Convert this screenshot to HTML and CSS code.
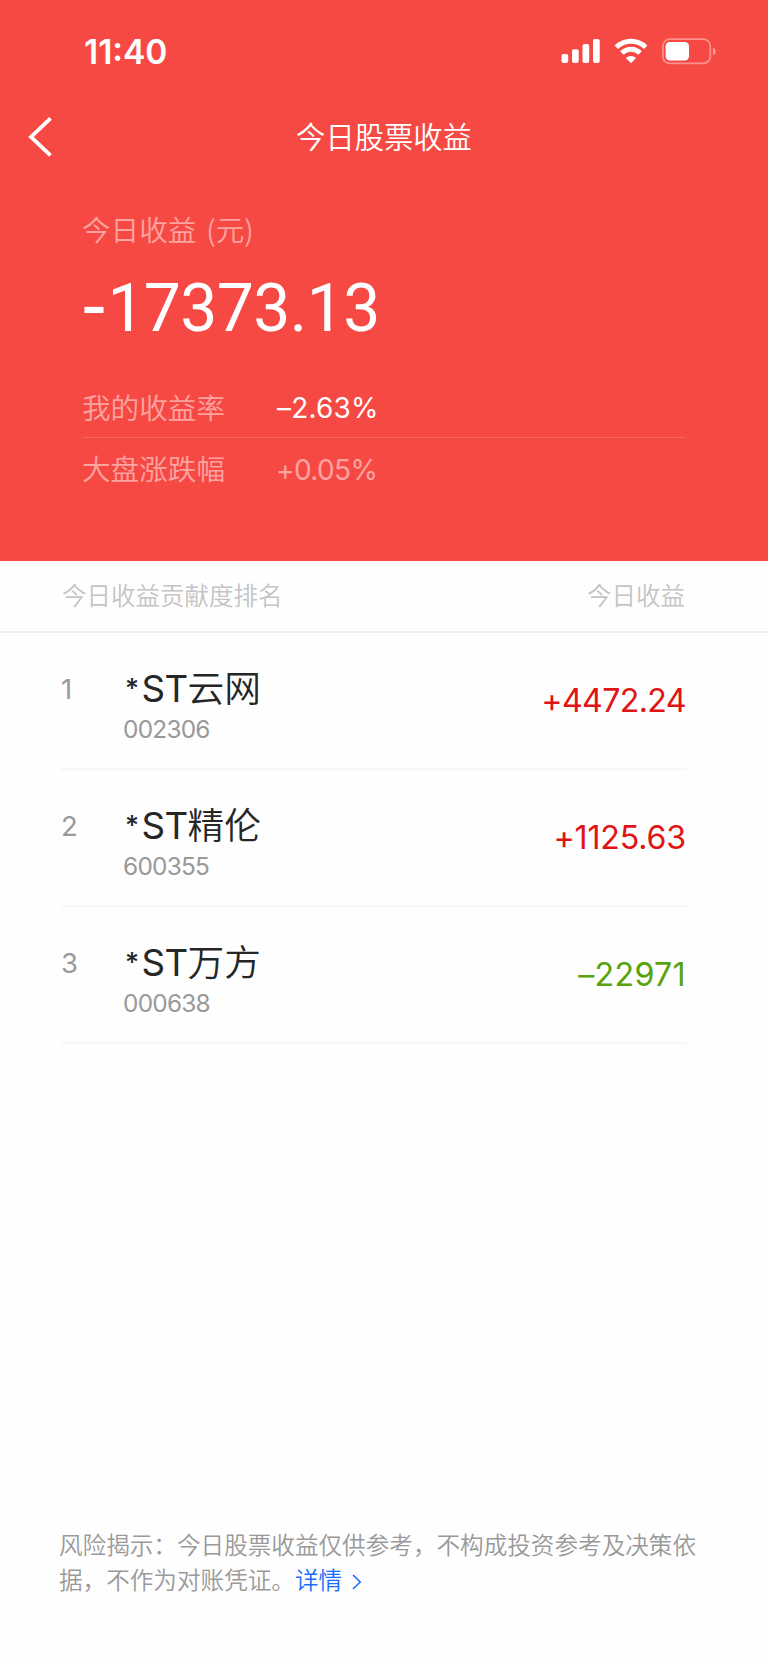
FILE: index.html
```html
<!DOCTYPE html>
<html lang="zh-CN">
<head>
<meta charset="utf-8">
<title>今日股票收益</title>
<link rel="stylesheet" href="styles.css">
</head>
<body>
<header class="hero">
  <div class="status">
    <span class="time">11:40</span>
    <div class="status-icons">
      <svg class="signal" width="40" height="26" viewBox="0 0 40 26" fill="#fff">
        <rect x="0.5" y="16" width="6.7" height="9" rx="2"/>
        <rect x="11" y="11.3" width="6.7" height="13.7" rx="2"/>
        <rect x="21.5" y="6" width="6.7" height="19" rx="2"/>
        <rect x="32" y="1" width="6.7" height="24" rx="2"/>
      </svg>
      <svg class="wifi" width="34" height="26" viewBox="0 0 34 26">
        <g fill="none" stroke="#fff" stroke-width="4.9">
          <path d="M2.3 9.3a20.8 20.8 0 0 1 29.4 0"/>
          <path d="M7.9 15a12.8 12.8 0 0 1 18.2 0"/>
        </g>
        <path d="M17 25.2l-5.1-5.2a7.3 7.3 0 0 1 10.2 0z" fill="#fff"/>
      </svg>
      <svg class="battery" width="55" height="27" viewBox="0 0 55 27">
        <rect x="0.9" y="1.2" width="47.4" height="24.2" rx="7" fill="none" stroke="#fff" stroke-opacity=".4" stroke-width="1.7"/>
        <rect x="3.6" y="4" width="23.4" height="18.4" rx="4.2" fill="#fff"/>
        <path d="M51 9.4c3.6 1.4 3.6 6.4 0 7.8z" fill="#fff" fill-opacity=".45"/>
      </svg>
    </div>
  </div>
  <nav class="navbar">
    <svg class="back" width="26" height="40" viewBox="0 0 26 40"><path d="M23.5 1.4L4 20L23.5 38.4" fill="none" stroke="#fff" stroke-width="3.8"/></svg>
    <h1 class="title">今日股票收益</h1>
  </nav>
  <section class="summary">
    <p class="label earn">今日收益 (元)</p>
    <p class="total"><span class="sign">-</span>17373.13</p>
    <div class="stat"><span class="label">我的收益率</span><span class="rate mine">–2.63%</span></div>
    <div class="stat market"><span class="label">大盘涨跌幅</span><span class="rate">+0.05%</span></div>
  </section>
</header>
<main class="ranking">
  <div class="list-head"><span>今日收益贡献度排名</span><span>今日收益</span></div>
  <ol class="stocks">
    <li class="stock"><span class="rank">1</span><div class="info"><span class="name"><span class="st"><span class="star">*</span>ST</span>云网</span><span class="code">002306</span></div><span class="amount up tight">+4472.24</span></li>
    <li class="stock"><span class="rank">2</span><div class="info"><span class="name"><span class="st"><span class="star">*</span>ST</span>精伦</span><span class="code">600355</span></div><span class="amount up">+1125.63</span></li>
    <li class="stock"><span class="rank">3</span><div class="info"><span class="name"><span class="st"><span class="star">*</span>ST</span>万方</span><span class="code">000638</span></div><span class="amount down">–22971</span></li>
  </ol>
</main>
<footer class="notice">风险揭示：今日股票收益仅供参考，不构成投资参考及决策依据，不作为对账凭证。<a class="more">详情<svg class="chevron" width="10" height="16" viewBox="0 0 10 16"><path d="M1 1l7.2 7L1 15" fill="none" stroke="#1a6dff" stroke-width="1.6"/></svg></a></footer>
</body>
</html>
```
FILE: styles.css
```css
* { box-sizing: border-box; margin: 0; padding: 0; }
body {
  width: 768px;
  height: 1663px;
  display: flex;
  flex-direction: column;
  background: #fefefe;
  color: #262626;
  font-family: "Noto Sans CJK SC", sans-serif;
  font-weight: 350;
  overflow: hidden;
}
.hero { height: 560.6px; background: #f74944; color: #fff; }
.status {
  height: 105px;
  padding: 0 51px 0 84px;
  display: flex;
  justify-content: space-between;
}
.time {
  margin-top: 32px;
  font: 600 33.5px/40px Inter, sans-serif;
}
.status-icons { display: flex; margin-top: 38px; height: 27px; }
.signal { margin-right: 13px; }
.wifi { margin-right: 14px; }
.navbar {
  height: 60px;
  display: grid;
  grid-template-columns: 1fr auto 1fr;
  align-items: center;
}
.back { margin-left: 27px; margin-top: 3px; }
.title { font-size: 29.3px; font-weight: 350; line-height: 60px; }
.summary { padding: 44px 82px 0; }
.label { font-size: 28.6px; line-height: 40px; color: rgba(255, 255, 255, .5); }
.earn { word-spacing: 3.5px; }
.total {
  margin: 23px 0 28px;
  font: 400 66px/74px Roboto, Arial, sans-serif;
  letter-spacing: -.6px;
}
.sign { font: 400 78px/60px "Liberation Sans", Arial, sans-serif; margin: 0 1px 0 -1px; }
.stat { height: 64px; display: flex; align-items: center; border-bottom: 1px solid rgba(255, 255, 255, .15); }
.stat .label { width: 194px; margin-top: 2px; }
.rate { font: 400 28px/40px Inter, sans-serif; margin-top: 4px; }
.mine { letter-spacing: .2px; padding-left: 1px; }
.market { border: 0; height: 60px; }
.market .label { margin-top: 0; }
.market .rate { color: rgba(255, 255, 255, .5); letter-spacing: -.6px; }
.list-head {
  height: 72.4px;
  padding: 0 83px 2px 62px;
  display: flex;
  justify-content: space-between;
  align-items: center;
  border-bottom: 2px solid #eee;
  color: #c4c4c4;
  font-size: 24.5px;
}
.stocks { list-style: none; margin: 0 82px 0 61px; }
.stock { height: 137px; display: flex; border-bottom: 2px solid #f7f7f7; }
.rank { width: 61px; margin-top: 36px; font: 400 27.5px/40px Inter, sans-serif; color: #999; }
.info { flex: 1; display: flex; flex-direction: column; padding-top: 28px; }
.name { font-size: 36.7px; line-height: 50px; }
.st { font: 400 36.7px/40px Inter, sans-serif; letter-spacing: -.6px; }
.star { font-size: 27px; font-weight: 500; margin: 0 3px; vertical-align: 4px; line-height: 20px; }
.code { margin: 3px 0 0 1px; font: 400 24.4px/30px Inter, sans-serif; letter-spacing: -.75px; color: #999; }
.amount { margin-top: 48px; font: 400 32.2px/40px Inter, sans-serif; letter-spacing: -.2px; }
.tight { letter-spacing: -.65px; }
.up { color: #e01414; }
.down { color: #58a30b; letter-spacing: .3px; }
.notice {
  margin-top: auto;
  margin-bottom: 65.5px;
  padding: 0 67px 0 59px;
  font-size: 23.6px;
  line-height: 35.5px;
  color: #999;
}
.more { color: #1a6dff; }
.chevron { margin-left: 10px; vertical-align: -1px; }
```
